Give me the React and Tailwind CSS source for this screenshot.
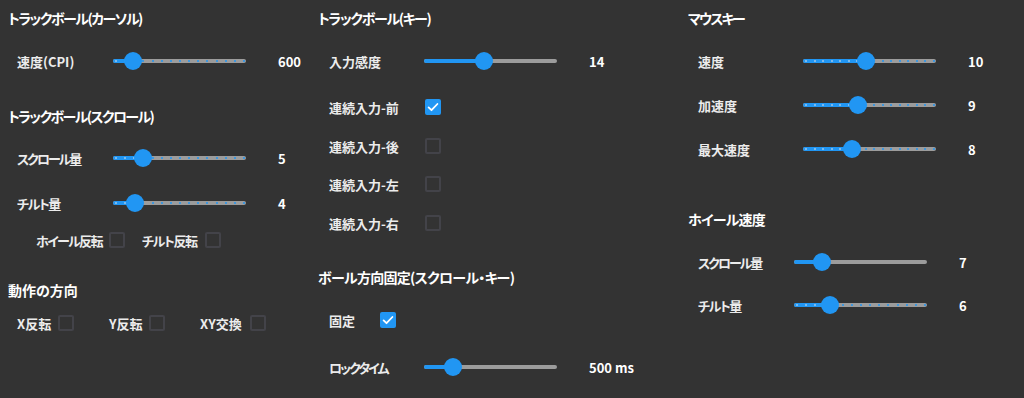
import React from "react";

const Heading = ({ children, tr = "", className = "" }) => (
    <div className={`flex h-[20px] items-center text-[14px] font-bold text-white whitespace-nowrap ${tr} ${className}`}>
        {children}
    </div>
);

const Slider = ({ thumb, ticks }) => {
    const dots = ticks
        ? Array.from({ length: ticks + 1 }, (_, i) => 2 + (i * 128) / ticks)
        : [];
    return (
        <div className="relative h-1 w-[133px] shrink-0 rounded-full bg-[#9c9c9c]">
            <div className="absolute left-0 top-0 h-1 rounded-full bg-[#2196f3]" style={{ width: thumb }} />
            {dots.map((x) => (
                <span
                    key={x}
                    className={`absolute top-[1px] size-[2px] rounded-full ${x < thumb ? "bg-[#9cc6ea]" : "bg-[#2196f3]"}`}
                    style={{ left: x }}
                />
            ))}
            <div
                className="absolute top-1/2 size-[18px] -translate-x-1/2 -translate-y-1/2 rounded-full bg-[#2196f3]"
                style={{ left: thumb }}
            />
        </div>
    );
};

const SliderRow = ({ label, labelW, tr = "", thumb, ticks, value, className = "" }) => (
    <div className={`flex h-[30px] items-center ${className}`}>
        <span className={`${labelW} ${tr} shrink-0 text-[13px] font-semibold text-[#ececec] whitespace-nowrap`}>{label}</span>
        <Slider thumb={thumb} ticks={ticks} />
        <span className="ml-[32px] text-[13px] font-bold text-white whitespace-nowrap">{value}</span>
    </div>
);

const Check = ({ checked }) =>
    checked ? (
        <span className="flex size-4 shrink-0 items-center justify-center rounded-[2px] bg-[#2196f3]">
            <svg viewBox="0 0 16 16" className="size-4" fill="none" stroke="white" strokeWidth="1.8" strokeLinecap="round" strokeLinejoin="round">
                <path d="M3.6 8.4l2.9 2.8 5.9-6.2" />
            </svg>
        </span>
    ) : (
        <span className="size-4 shrink-0 rounded-[2px] border-2 border-[#434349]" />
    );

const CheckItem = ({ label, labelW, tr = "", checked, className = "" }) => (
    <div className={`flex items-center ${className}`}>
        <span className={`${labelW} ${tr} shrink-0 text-[13px] font-semibold text-[#ececec] whitespace-nowrap`}>{label}</span>
        <Check checked={checked} />
    </div>
);

export default function App() {
    return (
        <div className="flex h-[398px] w-[1024px] overflow-hidden bg-[#333333] pl-[8px] pt-[8px] font-['Noto_Sans_CJK_JP','Noto_Sans',sans-serif] leading-none [font-feature-settings:'palt']">
            {/* カーソル / スクロール */}
            <div className="flex w-[310px] shrink-0 flex-col">
                <Heading tr="tracking-[-1.5px]">トラックボール(カーソル)</Heading>
                <SliderRow className="mt-[18px] pl-[9px]" label="速度(CPI)" labelW="w-[96px]" thumb={20} ticks={14} value="600" />

                <Heading className="mt-[30px]" tr="tracking-[-1.6px]">トラックボール(スクロール)</Heading>
                <SliderRow className="mt-[17px] pl-[9px]" label="スクロール量" labelW="w-[96px]" tr="tracking-[-2px]" thumb={30} ticks={14} value="5" />
                <SliderRow className="mt-[15px] pl-[9px]" label="チルト量" labelW="w-[96px]" tr="tracking-[-1.5px]" thumb={22} ticks={14} value="4" />
                <div className="mt-[12px] flex h-[20px] items-center pl-[28px]">
                    <CheckItem label="ホイール反転" labelW="w-[73px]" tr="tracking-[-1.7px]" />
                    <CheckItem className="ml-[17px]" label="チルト反転" labelW="w-[63px]" tr="tracking-[-1.4px]" />
                </div>

                <Heading className="mt-[30px]">動作の方向</Heading>
                <div className="mt-[13px] flex h-[20px] items-center pl-[9px]">
                    <CheckItem label="X反転" labelW="w-[41px]" />
                    <CheckItem className="ml-[35px]" label="Y反転" labelW="w-[40px]" />
                    <CheckItem className="ml-[35px]" label="XY交換" labelW="w-[50px]" />
                </div>
            </div>

            {/* キー */}
            <div className="flex w-[370px] shrink-0 flex-col">
                <Heading tr="tracking-[-1.3px]">トラックボール(キー)</Heading>
                <SliderRow className="mt-[18px] pl-[11px]" label="入力感度" labelW="w-[95px]" thumb={60} value="14" />
                <div className="flex flex-col pl-[11px]">
                    <CheckItem className="mt-[21px] h-[20px]" label="連続入力-前" labelW="w-[96px]" checked />
                    <CheckItem className="mt-[19px] h-[20px]" label="連続入力-後" labelW="w-[96px]" />
                    <CheckItem className="mt-[18px] h-[20px]" label="連続入力-左" labelW="w-[96px]" />
                    <CheckItem className="mt-[19px] h-[20px]" label="連続入力-右" labelW="w-[96px]" />
                </div>

                <Heading className="mt-[34px]" tr="tracking-[-0.7px]">ボール方向固定(スクロール・キー)</Heading>
                <CheckItem className="mt-[23px] h-[20px] pl-[11px]" label="固定" labelW="w-[51px]" checked />
                <SliderRow className="mt-[22px] pl-[11px]" label="ロックタイム" labelW="w-[95px]" tr="tracking-[-2px]" thumb={29} value="500 ms" />
            </div>

            {/* マウスキー / ホイール */}
            <div className="flex flex-1 flex-col">
                <Heading tr="tracking-[-2px]">マウスキー</Heading>
                <SliderRow className="mt-[18px] pl-[10px]" label="速度" labelW="w-[105px]" thumb={63} ticks={15} value="10" />
                <SliderRow className="mt-[14px] pl-[10px]" label="加速度" labelW="w-[105px]" thumb={55} ticks={15} value="9" />
                <SliderRow className="mt-[14px] pl-[10px]" label="最大速度" labelW="w-[105px]" thumb={49} ticks={15} value="8" />

                <Heading className="mt-[45px]" tr="tracking-[-0.8px]">ホイール速度</Heading>
                <SliderRow className="mt-[18px] pl-[10px]" label="スクロール量" labelW="w-[96px]" tr="tracking-[-2px]" thumb={28} value="7" />
                <SliderRow className="mt-[13px] pl-[10px]" label="チルト量" labelW="w-[96px]" tr="tracking-[-1.5px]" thumb={36} ticks={14} value="6" />
            </div>
        </div>
    );
}
